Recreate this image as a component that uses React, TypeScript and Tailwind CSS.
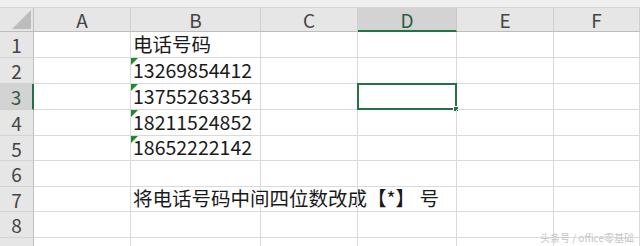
const cols = ["A", "B", "C", "D", "E", "F"];
const colWidths = "34px 97px 130px 97px 99px 97px 1fr";
const rowHeights = [26, 26, 26, 26, 25, 26, 25, 26, 20];

const cellText: Record<string, string> = {
  "1B": "电话号码",
  "2B": "13269854412",
  "3B": "13755263354",
  "4B": "18211524852",
  "5B": "18652222142",
  "7B": "将电话号码中间四位数改成【*】 号",
};

const flagged = ["2B", "3B", "4B", "5B"];

const font = { fontFamily: '"Noto Sans CJK SC", "Liberation Sans", sans-serif' };

export default function App() {
  return (
    <div className="relative flex h-[246px] w-[640px] flex-col overflow-hidden bg-white" style={font}>
      <div className="h-[8px] shrink-0 border-b border-[#d6d6d6] bg-[#efefef]" />
      <div className="grid" style={{ gridTemplateColumns: colWidths }}>
        {/* header row */}
        <div className="flex h-[24px] items-end justify-end border-r border-b border-[#bdbdbd] bg-[#e6e6e6] p-[2px]">
          <svg width="19" height="19" viewBox="0 0 19 19">
            <polygon points="19,0 19,19 0,19" fill="#bcbcbc" />
          </svg>
        </div>
        {cols.map((c) => (
          <div
            key={c}
            className={`flex h-[24px] items-center justify-center border-r border-b text-[19px] leading-none ${
              c === "D"
                ? "border-r-[#c8c8c8] border-b-2 border-b-[#217346] bg-[#d3d3d3] text-[#2f5c45]"
                : "border-r-[#d0d0d0] border-b-[#bdbdbd] bg-[#e6e6e6] text-[#444]"
            }`}
          >
            {c}
          </div>
        ))}
        {rowHeights.map((h, i) => {
          const r = i + 1;
          return [
            <div
              key={`h${r}`}
              className={`flex items-center justify-center border-b text-[19px] leading-none ${
                r === 3
                  ? "border-r-2 border-r-[#217346] border-b-[#cfcfcf] bg-[#d3d3d3] text-[#2f5c45]"
                  : "border-r border-r-[#bdbdbd] border-b-[#d3d3d3] bg-[#e6e6e6] text-[#444]"
              }`}
              style={{ height: h }}
            >
              {r < 9 ? r : ""}
            </div>,
            ...cols.map((c) => {
              const key = `${r}${c}`;
              return (
                <div
                  key={key}
                  className="relative flex items-end border-r border-b border-[#dadada] pb-[4px] pl-[2px]"
                  style={{ height: h }}
                >
                  {flagged.includes(key) && (
                    <svg className="absolute top-0 left-0" width="7" height="7" viewBox="0 0 7 7">
                      <polygon points="0,0 7,0 0,7" fill="#1f8a2c" />
                    </svg>
                  )}
                  {cellText[key] && (
                    <span className="whitespace-nowrap text-[19.5px] leading-[19px] text-[#1a1a1a]">
                      {cellText[key]}
                    </span>
                  )}
                  {key === "3D" && (
                    <div className="absolute -top-[1px] -left-[1px] -right-[1px] -bottom-[1px] border-2 border-[#217346]">
                      <div className="absolute -right-[4px] -bottom-[4px] h-[6px] w-[6px] border border-white bg-[#217346]" />
                    </div>
                  )}
                </div>
              );
            }),
          ];
        })}
      </div>
      <div className="absolute right-[6px] bottom-[3px] text-[10px] leading-none text-[#c4c4c4] [text-shadow:0_0_1px_#fff]">
        头条号 / office零基础
      </div>
    </div>
  );
}
